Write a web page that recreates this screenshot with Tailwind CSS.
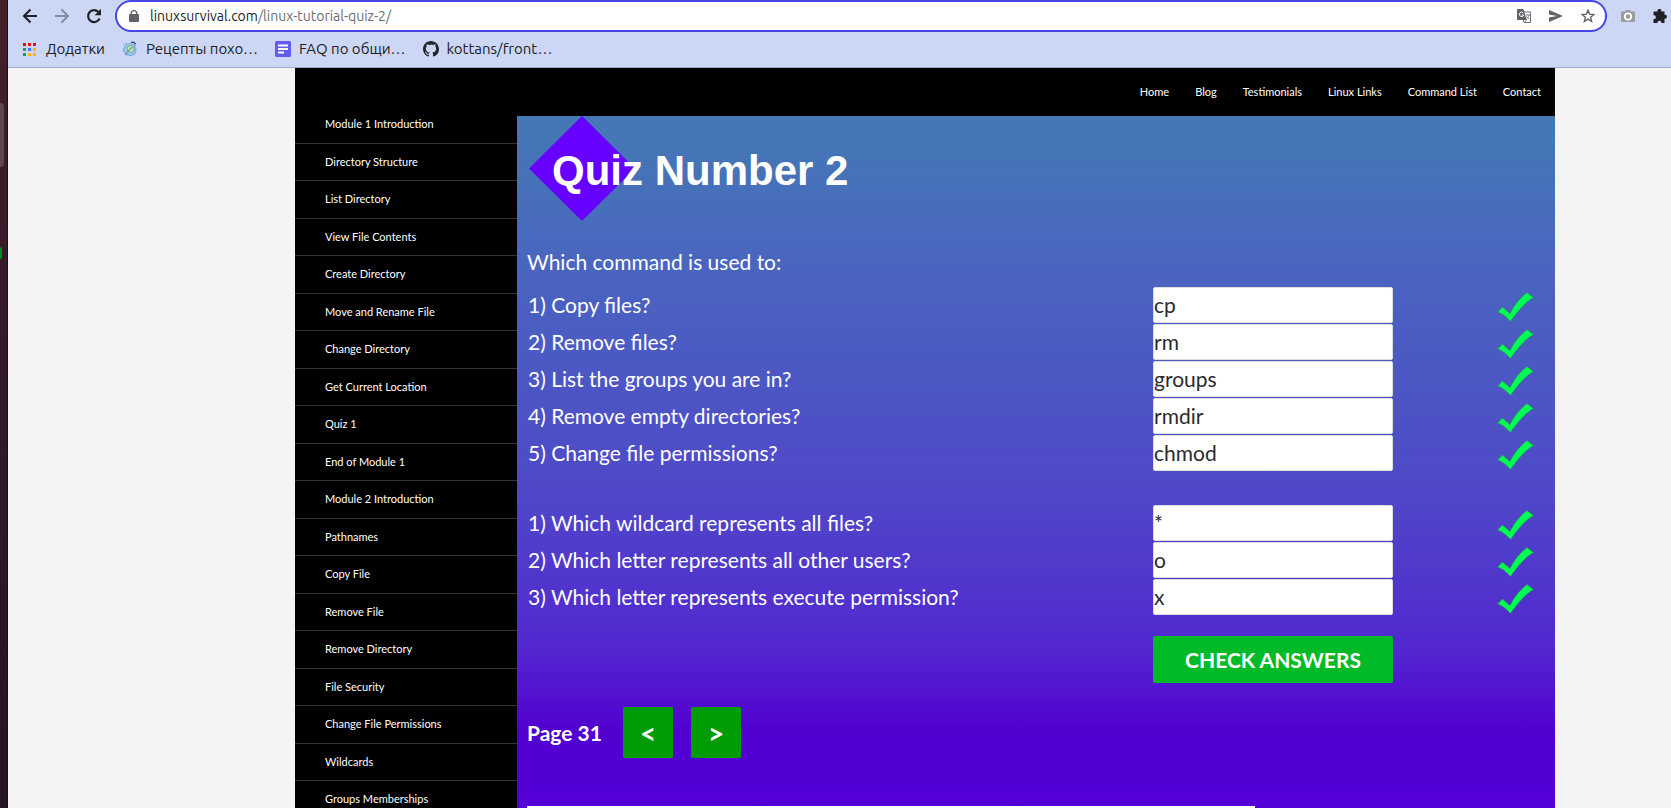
<!DOCTYPE html>
<html lang="en">
<head>
<meta charset="utf-8">
<title>Linux Tutorial Quiz 2</title>
<script src="https://cdn.jsdelivr.net/npm/@tailwindcss/browser@4"></script>
</head>
<body class="flex h-screen overflow-hidden bg-[#f4f4f4] font-['Lato',sans-serif]">
<svg class="hidden"><symbol id="tick" viewBox="0 0 37 30"><path d="M.500 20 L5.500 15 L13 21.500 C16.500 14.500 22 6.500 30 .500 L36.500 5.500 C28.500 10 21 19 13.500 29.500 C9.500 25.500 7 22.500 .500 20Z" fill="#0f5" stroke="#2b8a5c" stroke-width=".8"/></symbol></svg>

<!-- Desktop dock edge -->
<aside class="flex w-2 shrink-0 flex-col border-r border-[#1c0d16] bg-linear-to-b from-[#451f26] via-[#30182d] to-[#251425] pt-[103px]">
  <div class="h-16 w-1 shrink-0 rounded-r bg-[#5d4650]"></div>
  <div class="mt-20 h-3 w-0.5 shrink-0 rounded-r bg-[#0b8a14]"></div>
</aside>

<div class="flex min-w-0 flex-1 flex-col">
  <!-- Browser toolbar -->
  <header class="h-[68px] shrink-0 border-b border-[#a0a8cc] bg-[#ccd7f6] font-['Ubuntu','Noto_Sans',sans-serif] text-[#202124]">
    <div class="flex h-8 items-center">
      <button aria-label="Back" class="ml-3.5 size-4"><svg viewBox="0 0 16 16" fill="none" stroke="#202124" stroke-width="2"><path d="M15 8H2M8.500 1.500 2 8l6.500 6.500"/></svg></button>
      <button aria-label="Forward" class="ml-4 size-4"><svg viewBox="0 0 16 16" fill="none" stroke="#858ba3" stroke-width="2"><path d="M1 8h13M7.500 1.500 14 8l-6.500 6.500"/></svg></button>
      <button aria-label="Reload" class="ml-4 size-4"><svg viewBox="0 0 16 16" fill="none" stroke="#202124" stroke-width="2.200"><path d="M13.600 10.500A6 6 0 1 1 12.500 4"/><path d="M15 .800v6.400H8.600z" fill="#202124" stroke="none"/></svg></button>
      <div class="ml-[13px] flex h-8 min-w-0 flex-1 items-center rounded-full border-2 border-[#4745e6] bg-white pl-3 pr-2.5">
        <svg class="h-3 w-2.5 shrink-0" viewBox="0 0 10 12"><path d="M1.500 4V3.500a3.500 3.500 0 0 1 7 0V4H9a1 1 0 0 1 1 1v6a1 1 0 0 1-1 1H1a1 1 0 0 1-1-1V5a1 1 0 0 1 1-1zm1.300 0h4.400V3.500a2.200 2.200 0 0 0-4.400 0z" fill="#5f6368"/></svg>
        <p class="ml-[11px] flex-1 whitespace-nowrap text-sm">linuxsurvival.com<span class="text-[#6b6e75]">/linux-tutorial-quiz-2/</span></p>
        <button aria-label="Translate" class="h-3.5 w-3.5 shrink-0"><svg viewBox="0 0 14 14"><path d="M5 3h8.500v10.500H7z" fill="#fff" stroke="#6b6e75"/><path d="M0 1a1 1 0 0 1 1-1h5.500l3.200 11H1a1 1 0 0 1-1-1z" fill="#5f6368"/><path d="M6.300 4A2.200 2.200 0 1 0 6.700 6H4.600" fill="none" stroke="#fff"/><path d="M8.500 6H13M10.700 5v1M12 6c-.5 2-1.500 3.500-3 4.500M9.500 7.500l3 3M7.500 13.500 9.700 11" fill="none" stroke="#6b6e75" stroke-width=".8"/></svg></button>
        <button aria-label="Send page" class="ml-[18px] h-3 w-3.5 shrink-0"><svg viewBox="0 0 14 12"><path d="M0 0 14 6 0 12V7.500L8 6 0 4.500z" fill="#5f6368"/></svg></button>
        <button aria-label="Bookmark" class="ml-[18px] size-3.5 shrink-0"><svg viewBox="0 0 14 14"><path d="m7 1.200 1.600 4 4.300.3-3.300 2.800 1 4.200L7 10.200l-3.600 2.300 1-4.200L1.100 5.500l4.300-.3z" fill="none" stroke="#5f6368" stroke-width="1.400"/></svg></button>
      </div>
      <button aria-label="Screenshot" class="ml-3.5 h-3.5 w-3.5 shrink-0"><svg viewBox="0 0 14 14"><path d="M4 2.500 5 1h4l1 1.500h3a1 1 0 0 1 1 1V12a1 1 0 0 1-1 1H1a1 1 0 0 1-1-1V3.500a1 1 0 0 1 1-1z" fill="#9b9b9b"/><circle cx="7" cy="7.600" r="3.200" fill="none" stroke="#fff" stroke-width="1.800"/></svg></button>
      <button aria-label="Extensions" class="ml-[18px] mr-1 size-3.5 shrink-0"><svg viewBox="0 0 14 14"><path d="M1.500 2.500h3a2 2 0 1 1 3.800 0h3.200v3.300a2 2 0 1 1 0 3.900V14H8.300a1.900 1.900 0 1 0-3.700 0H.5v-4a1.900 1.900 0 1 0 0-3.700V3.500a1 1 0 0 1 1-1z" fill="#202124"/></svg></button>
    </div>
    <nav class="flex h-[34px] items-center gap-[17px] whitespace-nowrap pl-[15px] text-[15px]">
      <a href="#" class="flex items-center"><svg class="size-[13px]" viewBox="0 0 13 13"><path d="M0 0h3v3H0zM5 0h3v3H5zM10 0h3v3h-3z" fill="#f00a0a"/><path d="M0 5h3v3H0zM0 10h3v3H0z" fill="#16a34a"/><path d="M5 5h3v3H5z" fill="#4079f5"/><path d="M10 5h3v3h-3zM5 10h3v3H5zM10 10h3v3h-3z" fill="#fbb400"/></svg><span class="ml-2.5">Додатки</span></a>
      <a href="#" class="flex items-center"><svg class="h-4 w-4" viewBox="0 0 16 16"><circle cx="8" cy="8.500" r="5.800" fill="#a9d3e0" stroke="#86aee4" stroke-width="1.500"/><circle cx="8.500" cy="8" r="3.500" fill="#c9e79d" stroke="#58a7d1"/><path d="m3 14 7-8" stroke="#7a93ab" stroke-width="1.200"/><path d="M9 1.500c2.500-1 4 .3 4.500 2" fill="none" stroke="#29374e" stroke-width="1.300"/><path d="M1 3.500 5 2M12 12l2 1M1 7v4" stroke="#8cb4e6"/></svg><span class="ml-2">Рецепты похо…</span></a>
      <a href="#" class="flex items-center"><svg class="size-4" viewBox="0 0 16 16"><rect width="16" height="16" rx="1.500" fill="#625cf5"/><path d="M3 4.500h10M3 8h10M3 11.500h6" stroke="#fff" stroke-width="1.800"/></svg><span class="ml-2">FAQ по общи…</span></a>
      <a href="#" class="flex items-center"><svg class="size-4" viewBox="0 0 16 16"><path fill="#24292f" d="M8 0C3.580 0 0 3.580 0 8c0 3.540 2.290 6.530 5.470 7.590.4.070.55-.17.55-.38 0-.19-.01-.82-.01-1.490-2.010.37-2.530-.49-2.690-.94-.09-.23-.48-.94-.82-1.130-.28-.15-.68-.52-.01-.53.63-.01 1.080.58 1.230.82.72 1.210 1.870.87 2.330.66.07-.52.28-.87.51-1.070-1.780-.2-3.640-.89-3.640-3.950 0-.87.31-1.590.82-2.150-.08-.2-.36-1.020.08-2.120 0 0 .67-.21 2.200.82.64-.18 1.320-.27 2-.27s1.360.09 2 .27c1.530-1.040 2.200-.82 2.200-.82.44 1.100.16 1.920.08 2.120.51.56.82 1.270.82 2.150 0 3.070-1.870 3.750-3.650 3.950.29.25.54.73.54 1.480 0 1.070-.01 1.930-.01 2.200 0 .21.150.46.55.38A8.010 8.010 0 0 0 16 8c0-4.420-3.580-8-8-8z"/></svg><span class="ml-2">kottans/front…</span></a>
    </nav>
  </header>

  <!-- Page -->
  <div class="flex min-h-0 flex-1 flex-col pl-[287px] pr-[116px]">
    <nav class="flex h-12 shrink-0 items-center justify-end gap-[26px] bg-black pr-3.5 text-[11px] text-white">
      <a href="#">Home</a><a href="#">Blog</a><a href="#">Testimonials</a><a href="#">Linux Links</a><a href="#">Command List</a><a href="#">Contact</a>
    </nav>
    <div class="flex min-h-0 flex-1">
      <nav class="w-[222px] shrink-0 overflow-hidden bg-black text-[11px] text-white">
        <ul class="-mt-2.5 *:flex *:items-center *:border-b *:border-[#333] *:pl-[30px] *:odd:h-[38px] *:even:h-[37px]">
          <li><a href="#">Module 1 Introduction</a></li>
          <li><a href="#">Directory Structure</a></li>
          <li><a href="#">List Directory</a></li>
          <li><a href="#">View File Contents</a></li>
          <li><a href="#">Create Directory</a></li>
          <li><a href="#">Move and Rename File</a></li>
          <li><a href="#">Change Directory</a></li>
          <li><a href="#">Get Current Location</a></li>
          <li><a href="#">Quiz 1</a></li>
          <li><a href="#">End of Module 1</a></li>
          <li><a href="#">Module 2 Introduction</a></li>
          <li><a href="#">Pathnames</a></li>
          <li><a href="#">Copy File</a></li>
          <li><a href="#">Remove File</a></li>
          <li><a href="#">Remove Directory</a></li>
          <li><a href="#">File Security</a></li>
          <li><a href="#">Change File Permissions</a></li>
          <li><a href="#">Wildcards</a></li>
          <li><a href="#">Groups Memberships</a></li>
        </ul>
      </nav>
      <main class="min-w-0 flex-1 overflow-hidden bg-[linear-gradient(to_bottom,#4577b6_0px,#4577b6_20px,#4a64c0_160px,#4f48c8_375px,#5228cf_530px,#5200d0_616px,#5400d8_692px)] pl-2.5 pr-[21px] text-[21px] text-white">
        <div class="relative flex h-[108px] items-center pl-[25px]">
          <svg class="absolute left-0.5 top-0 size-[106px]" viewBox="0 0 106 106"><path d="M53 0l53 52.500L53 105 0 52.500z" fill="#60f"/></svg>
          <h1 class="relative font-['Liberation_Sans',sans-serif] text-[42px] font-bold">Quiz Number 2</h1>
        </div>
        <form>
          <p class="mt-[22px] h-[41px] leading-8">Which command is used to:</p>
          <div class="grid grid-cols-[1fr_240px_141px] items-center gap-y-px [&_label]:pl-px [&_input]:h-9 [&_input]:w-full [&_input]:rounded-[2px] [&_input]:border [&_input]:border-[#ddd] [&_input]:bg-white [&_input]:pb-0.5 [&_input]:text-[#2b2b2b] [&_svg]:mt-1 [&_svg]:h-[30px] [&_svg]:w-[37px] [&_svg]:justify-self-end">
            <label for="a1">1) Copy files?</label><input id="a1" value="cp"><svg><use href="#tick"/></svg>
            <label for="a2">2) Remove files?</label><input id="a2" value="rm"><svg><use href="#tick"/></svg>
            <label for="a3">3) List the groups you are in?</label><input id="a3" value="groups"><svg><use href="#tick"/></svg>
            <label for="a4">4) Remove empty directories?</label><input id="a4" value="rmdir"><svg><use href="#tick"/></svg>
            <label for="a5">5) Change file permissions?</label><input id="a5" value="chmod"><svg><use href="#tick"/></svg>
            <div class="col-span-3 h-8"></div>
            <label for="b1">1) Which wildcard represents all files?</label><input id="b1" value="*"><svg><use href="#tick"/></svg>
            <label for="b2">2) Which letter represents all other users?</label><input id="b2" value="o"><svg><use href="#tick"/></svg>
            <label for="b3">3) Which letter represents execute permission?</label><input id="b3" value="x"><svg><use href="#tick"/></svg>
            <button type="button" class="col-start-2 mt-5 h-[47px] rounded-[2px] bg-[#00bb27] font-bold">CHECK ANSWERS</button>
          </div>
        </form>
        <div class="mt-6 flex items-center">
          <p class="w-24 font-bold">Page 31</p>
          <button class="h-[51px] w-[50px] rounded-[1px] bg-[#009c05] text-[28px] font-bold">&lt;</button>
          <button class="ml-[18px] h-[51px] w-[50px] rounded-[1px] bg-[#009c05] text-[28px] font-bold">&gt;</button>
        </div>
        <div class="mt-12 h-24 w-[728px] bg-white"></div>
      </main>
    </div>
  </div>
</div>
</body>
</html>
